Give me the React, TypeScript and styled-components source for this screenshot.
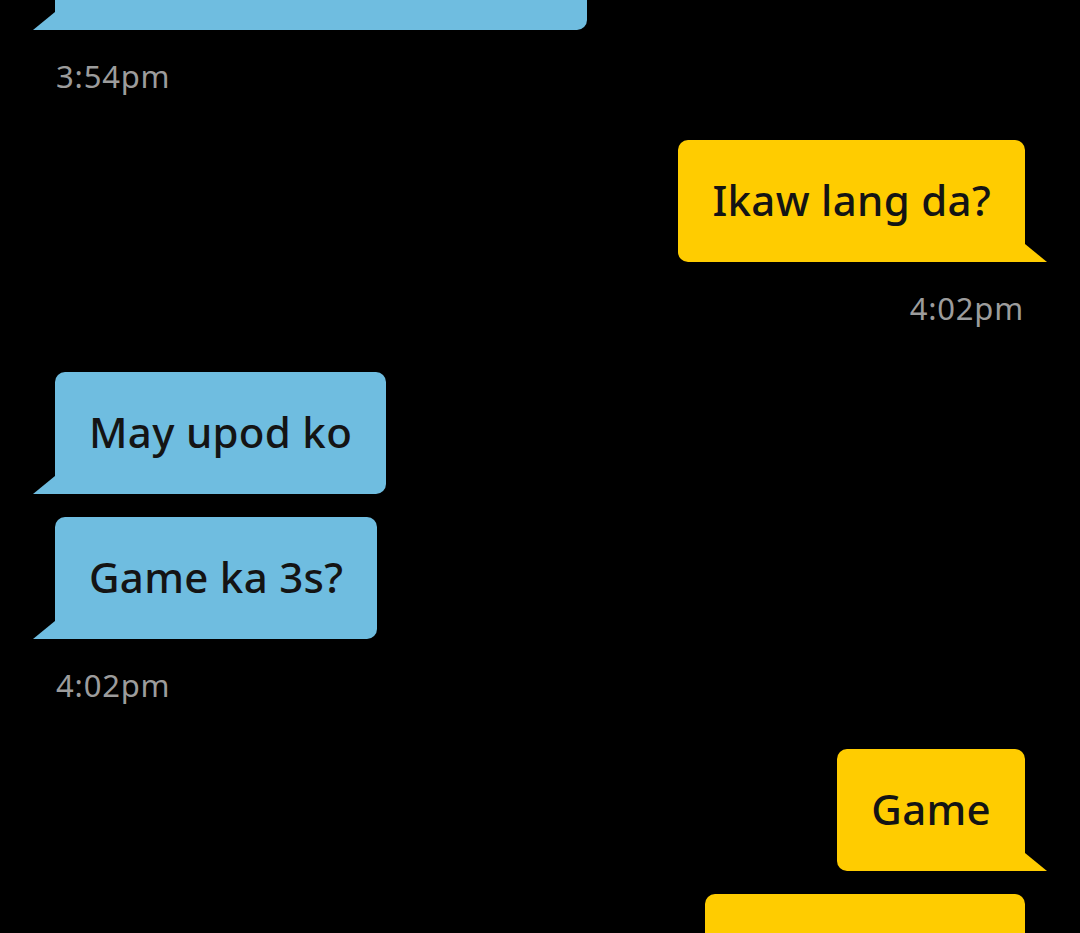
import React from "react"
import styled, { createGlobalStyle, css } from "styled-components"

type Side = "in" | "out"

const Global = createGlobalStyle`
  html, body {
    margin: 0;
    background: #000;
    overflow: hidden;
  }
  body {
    font-family: "Noto Sans", "Open Sans", sans-serif;
  }
`

const Thread = styled.div`
  display: flex;
  flex-direction: column;
  padding: 0 55px;
  margin-top: -92px;
`

const Group = styled.div<{ $side: Side }>`
  display: flex;
  flex-direction: column;
  gap: 23px;
  align-items: ${(p) => (p.$side === "out" ? "flex-end" : "flex-start")};
`

const Bubble = styled.div<{ $side: Side; $tail?: boolean; $width?: number }>`
  position: relative;
  box-sizing: border-box;
  min-height: 122px;
  padding: 33px 34px 35px;
  font-size: 42px;
  font-weight: 500;
  letter-spacing: 0.3px;
  line-height: 54px;
  color: #141414;
  border-radius: 10px;
  width: ${(p) => (p.$width ? `${p.$width}px` : "auto")};

  ${(p) =>
    p.$side === "in"
      ? css`
          background: #6fbde0;
        `
      : css`
          background: #ffcc00;
        `}

  ${(p) =>
    p.$tail &&
    (p.$side === "in"
      ? css`
          border-bottom-left-radius: 0;
          &::after {
            content: "";
            position: absolute;
            left: -22px;
            bottom: 0;
            width: 22px;
            height: 18px;
            background: #6fbde0;
            clip-path: polygon(100% 0, 100% 100%, 0 100%);
          }
        `
      : css`
          border-bottom-right-radius: 0;
          &::after {
            content: "";
            position: absolute;
            right: -22px;
            bottom: 0;
            width: 22px;
            height: 18px;
            background: #ffcc00;
            clip-path: polygon(0 0, 100% 100%, 0 100%);
          }
        `)}
`

const Time = styled.div<{ $side: Side }>`
  margin: 26px 1px 44px;
  font-size: 31px;
  letter-spacing: 0.8px;
  line-height: 40px;
  color: #9c9c9c;
  text-align: ${(p) => (p.$side === "out" ? "right" : "left")};
`

const App: React.FC = () => {
  return (
    <>
      <Global />
      <Thread>
        <Group $side="in">
          <Bubble $side="in" $tail $width={532} />
        </Group>
        <Time $side="in">3:54pm</Time>

        <Group $side="out">
          <Bubble $side="out" $tail>
            Ikaw lang da?
          </Bubble>
        </Group>
        <Time $side="out">4:02pm</Time>

        <Group $side="in">
          <Bubble $side="in" $tail>
            May upod ko
          </Bubble>
          <Bubble $side="in" $tail>
            Game ka 3s?
          </Bubble>
        </Group>
        <Time $side="in">4:02pm</Time>

        <Group $side="out">
          <Bubble $side="out" $tail>
            Game
          </Bubble>
          <Bubble $side="out" $width={320} />
        </Group>
      </Thread>
    </>
  )
}

export default App
